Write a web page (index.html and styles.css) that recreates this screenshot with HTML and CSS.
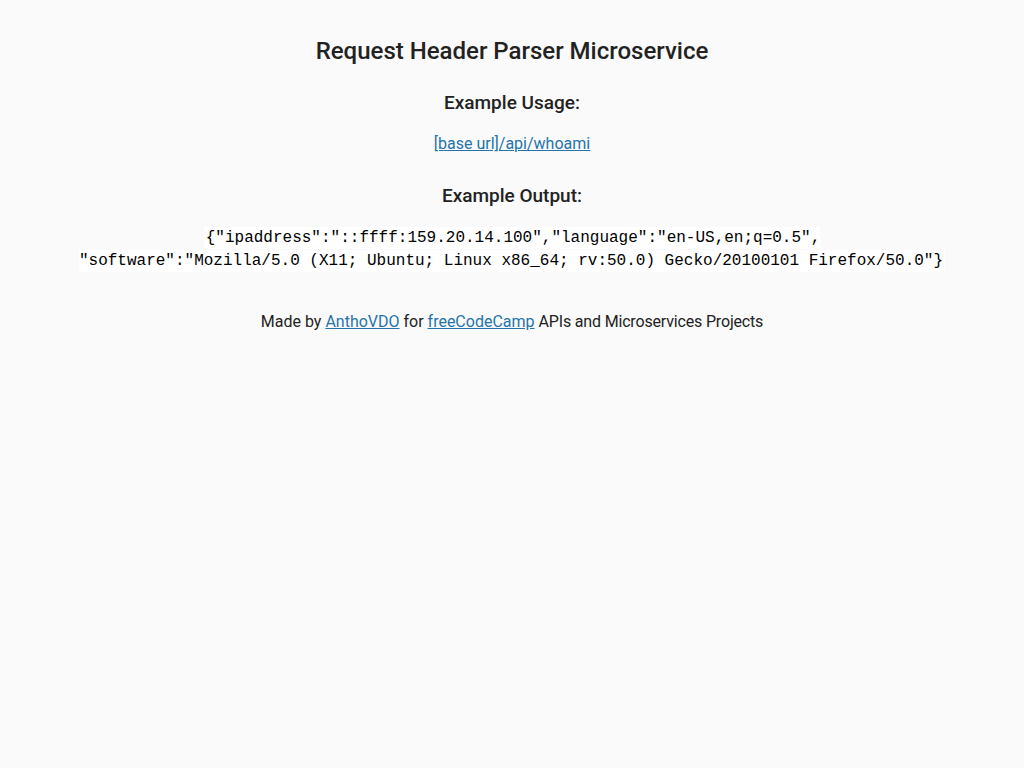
FILE: index.html
```
<!DOCTYPE html>
<html>
<head>
<meta charset="utf-8">
<title>Request Header Parser Microservice</title>
<link rel="stylesheet" href="styles.css">
</head>
<body>
<div class="container">
  <h1 class="title">Request Header Parser Microservice</h1>
  <h3 class="subtitle">Example Usage:</h3>
  <p><a href="#">[base url]/api/whoami</a></p>
  <h3 class="subtitle">Example Output:</h3>
  <p><code>{"ipaddress":"::ffff:159.20.14.100","language":"en-US,en;q=0.5",<br>"software":"Mozilla/5.0 (X11; Ubuntu; Linux x86_64; rv:50.0) Gecko/20100101 Firefox/50.0"}</code></p>
</div>
<div class="footer">
  <p>Made by <a href="#">AnthoVDO</a> for <a href="#">freeCodeCamp</a> <span class="tight">APIs and Microservices Projects</span></p>
</div>
</body>
</html>
```
FILE: styles.css
```
body {
  margin: 8px;
  font-family: Roboto, "Liberation Sans", sans-serif;
  font-size: 16px;
  color: #222;
  background-color: #fafafa;
  text-align: center;
  line-height: 1.4em;
}
.container {
  margin-top: 32px;
}
.title {
  font-size: 24px;
  font-weight: 500;
  margin: 0;
}
.subtitle {
  font-size: 19px;
  font-weight: 500;
  margin: 30px 0 18px;
}
p {
  margin: 16px 0;
}
code {
  font-family: "Liberation Mono", monospace;
  font-size: 16px;
  color: #000;
  background-color: #fff;
  padding: 2px;
}
a {
  color: #2574a9;
}
.footer {
  margin-top: 39px;
}
.tight {
  letter-spacing: -0.17px;
}
```
